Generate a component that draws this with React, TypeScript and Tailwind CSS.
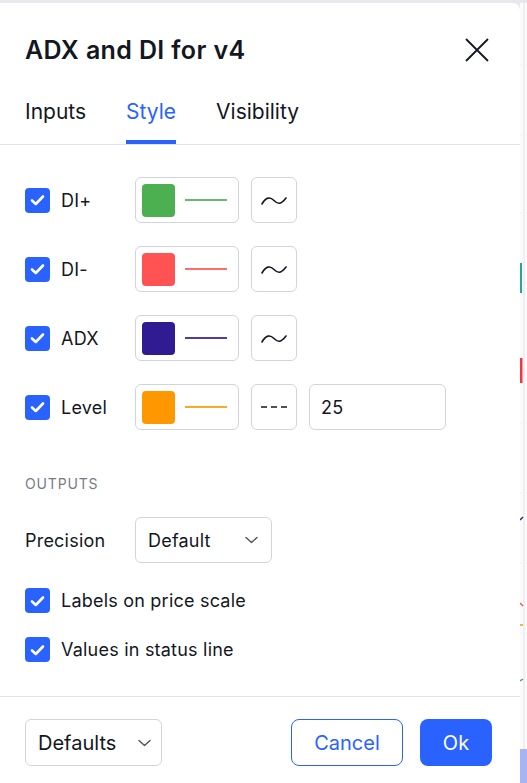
import React from 'react';

const font = { fontFamily: 'Inter, "Noto Sans", sans-serif' };

function Check() {
  return (
    <div className="w-[25px] h-[25px] rounded-[4px] bg-[#2962ff] flex items-center justify-center shrink-0">
      <svg width="15" height="12" viewBox="0 0 15 12" fill="none">
        <path d="M2 6.5 L5.8 10 L13 2.5" stroke="white" strokeWidth="2.6" strokeLinecap="round" strokeLinejoin="round" />
      </svg>
    </div>
  );
}

function ColorButton({ color }: { color: string }) {
  return (
    <div className="w-[104px] h-[46px] border border-[#d1d4dc] rounded-[6px] flex items-center pl-[6px] gap-[10px]">
      <div className="w-[33px] h-[33px] rounded-[4px]" style={{ backgroundColor: color }} />
      <div className="w-[42px] h-[2px]" style={{ backgroundColor: color, opacity: 0.85 }} />
    </div>
  );
}

function StyleButton({ dashed }: { dashed?: boolean }) {
  return (
    <div className="w-[46px] h-[46px] border border-[#d1d4dc] rounded-[6px] flex items-center justify-center">
      {dashed ? (
        <svg width="26" height="4" viewBox="0 0 26 4">
          <path d="M0 2 H6 M10 2 H16 M20 2 H26" stroke="#131722" strokeWidth="1.6" />
        </svg>
      ) : (
        <svg width="26" height="12" viewBox="0 0 26 12" fill="none">
          <path d="M1 10 C5 3 9 2.5 13 6.5 S20 10.5 25 4" stroke="#131722" strokeWidth="1.6" strokeLinecap="round" />
        </svg>
      )}
    </div>
  );
}

function Chevron() {
  return (
    <svg width="13" height="8" viewBox="0 0 13 8" fill="none">
      <path d="M1 1.5 L6.5 6.5 L12 1.5" stroke="#50535e" strokeWidth="1.4" strokeLinecap="round" strokeLinejoin="round" />
    </svg>
  );
}

const plots = [
  { name: 'DI+', color: '#4caf50' },
  { name: 'DI-', color: '#ff5252' },
  { name: 'ADX', color: '#311b92' },
];

export default function App() {
  return (
    <div className="w-[527px] h-[783px] bg-[#e6e8ee] pt-[3px] flex overflow-hidden text-[#131722]" style={font}>
      <div className="w-[520px] h-[780px] bg-white rounded-tr-[7px] flex flex-col">
        {/* header */}
        <div className="flex items-center justify-between pl-[25px] pr-[31px] pt-[32px]">
          <h1 className="text-[25px] leading-[30px] font-semibold tracking-[0.015em]">ADX and DI for v4</h1>
          <svg width="24" height="24" viewBox="0 0 24 24" fill="none">
            <path d="M1 1 L23 23 M23 1 L1 23" stroke="#131722" strokeWidth="1.8" />
          </svg>
        </div>

        {/* tabs */}
        <div className="mt-[15px] h-[65px] border-b border-[#e0e3eb] flex pl-[25px] gap-[40px] text-[21px]">
          <div className="flex items-center">Inputs</div>
          <div className="relative flex items-center text-[#2962ff]">
            Style
            <div className="absolute left-0 right-0 bottom-0 h-[4px] bg-[#2962ff]" />
          </div>
          <div className="flex items-center">Visibility</div>
        </div>

        {/* body */}
        <div className="flex-1 px-[25px] pt-[32px] text-[18px] tracking-[0.012em]">
          <div className="flex flex-col gap-[23px]">
            {plots.map((p) => (
              <div key={p.name} className="flex items-center">
                <div className="w-[110px] flex items-center gap-[11px]">
                  <Check />
                  <span>{p.name}</span>
                </div>
                <ColorButton color={p.color} />
                <div className="ml-[12px]">
                  <StyleButton />
                </div>
              </div>
            ))}
            <div className="flex items-center">
              <div className="w-[110px] flex items-center gap-[11px]">
                <Check />
                <span>Level</span>
              </div>
              <ColorButton color="#ff9800" />
              <div className="ml-[12px]">
                <StyleButton dashed />
              </div>
              <div className="ml-[12px] w-[137px] h-[46px] border border-[#d1d4dc] rounded-[6px] flex items-center pl-[11px]">
                25
              </div>
            </div>
          </div>

          <div className="mt-[44px] text-[14px] leading-[20px] tracking-[0.06em] text-[#787b86]">OUTPUTS</div>

          <div className="mt-[23px] flex items-center">
            <div className="w-[110px]">Precision</div>
            <div className="w-[137px] h-[46px] border border-[#d1d4dc] rounded-[6px] flex items-center justify-between pl-[12px] pr-[13px]">
              <span>Default</span>
              <Chevron />
            </div>
          </div>

          <div className="mt-[24px] flex items-center gap-[11px]">
            <Check />
            <span>Labels on price scale</span>
          </div>
          <div className="mt-[22px] flex items-center gap-[11px]">
            <Check />
            <span>Values in status line</span>
          </div>
        </div>

        {/* footer */}
        <div className="h-[87px] border-t border-[#e0e3eb] flex items-start justify-between pl-[25px] pr-[28px] pt-[22px] text-[20px]">
          <div className="w-[137px] h-[47px] border border-[#d1d4dc] rounded-[6px] flex items-center justify-between pl-[12px] pr-[10px]">
            <span>Defaults</span>
            <Chevron />
          </div>
          <div className="flex gap-[17px]">
            <button className="w-[112px] h-[47px] border border-[#2962ff] rounded-[8px] text-[#2962ff]">Cancel</button>
            <button className="w-[72px] h-[47px] bg-[#2962ff] rounded-[8px] text-white">Ok</button>
          </div>
        </div>
      </div>

      {/* chart edge behind the dialog */}
      <svg width="7" height="780" viewBox="0 0 7 780" className="bg-[#fbfbfc] shrink-0">
        <path d="M4 0 V780" stroke="#e0e3eb" strokeWidth="1" />
        <path d="M0 62 H7 M0 132 H7 M0 210 H7 M0 280 H7 M0 352 H7 M0 420 H7 M0 490 H7 M0 560 H7 M0 630 H7" stroke="#f0f1f4" strokeWidth="1" />
        <path d="M1 260 V290" stroke="#26a69a" strokeWidth="2" />
        <path d="M1 355 V380" stroke="#f23645" strokeWidth="3" />
        <path d="M0 517 L3 514" stroke="#311b92" strokeWidth="1.5" />
        <path d="M0 600 L3 603" stroke="#ff5252" strokeWidth="1.5" />
        <path d="M0 622 H3" stroke="#ff9800" strokeWidth="1.5" />
        <path d="M0 678 L3 676" stroke="#4caf50" strokeWidth="1.5" />
        <rect x="0" y="746" width="7" height="34" fill="#a7b3f5" />
      </svg>
    </div>
  );
}
